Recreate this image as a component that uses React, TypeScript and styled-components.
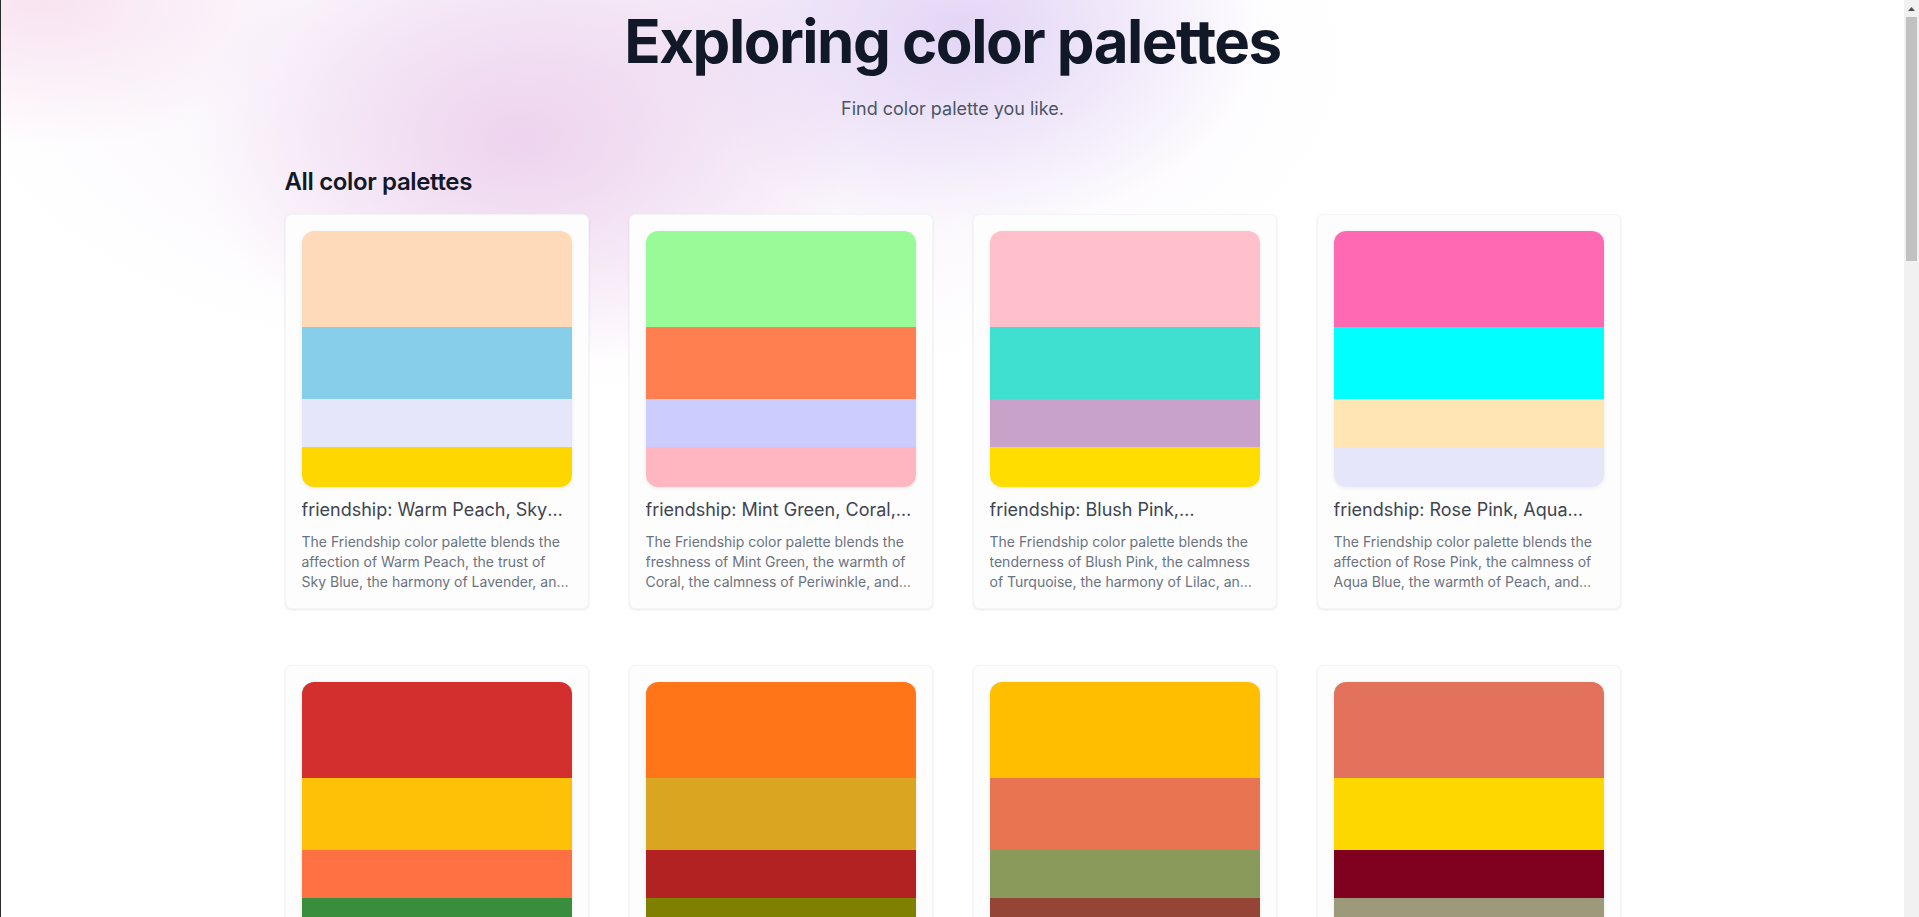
import React from "react";
import styled, { createGlobalStyle } from "styled-components";

const GlobalStyle = createGlobalStyle`
  html, body {
    margin: 0;
    padding: 0;
    background: #ffffff;
  }
  body {
    font-family: Inter, "Noto Sans", "Liberation Sans", sans-serif;
    color: #111827;
    -webkit-font-smoothing: antialiased;
  }
  * {
    box-sizing: border-box;
  }
`;

const Page = styled.div`
  min-height: 100vh;
  margin-right: 15px;
  border-left: 1px solid #2b2b2b;
  background:
    radial-gradient(ellipse 260px 150px at 40px 0px, rgba(246, 218, 236, 0.75), rgba(246, 218, 236, 0) 100%),
    radial-gradient(ellipse 330px 230px at 520px 140px, rgba(236, 206, 236, 0.85), rgba(236, 206, 236, 0) 100%),
    radial-gradient(ellipse 300px 200px at 960px 30px, rgba(226, 212, 246, 0.95), rgba(226, 212, 246, 0) 100%),
    radial-gradient(ellipse 700px 330px at 650px 60px, rgba(244, 234, 248, 0.9), rgba(244, 234, 248, 0) 100%),
    #ffffff;
`;

const ScrollTrack = styled.div`
  position: fixed;
  top: 0;
  right: 0;
  width: 15px;
  height: 100vh;
  background: #f1f1f1;
  display: flex;
  flex-direction: column;
  align-items: center;
`;

const ScrollArrow = styled.div`
  flex: 0 0 17px;
  display: flex;
  align-items: center;
  justify-content: center;
`;

const ScrollThumb = styled.div`
  width: 11px;
  height: 244px;
  background: #c1c1c1;
`;

const Container = styled.main`
  width: 1336px;
  margin: 0 auto;
  padding: 11px 0 64px;
`;

const Hero = styled.header`
  display: flex;
  flex-direction: column;
  align-items: center;
  text-align: center;
`;

const Title = styled.h1`
  margin: 0;
  font-size: 60px;
  line-height: 60px;
  font-weight: 700;
  letter-spacing: -0.025em;
  color: #111827;
`;

const Subtitle = styled.p`
  margin: 24px 0 0;
  font-size: 18px;
  line-height: 28px;
  color: #4b5563;
`;

const SectionTitle = styled.h2`
  margin: 43px 0 16px;
  font-size: 24px;
  line-height: 32px;
  font-weight: 600;
  letter-spacing: -0.015em;
  color: #111827;
`;

const Grid = styled.div`
  display: grid;
  grid-template-columns: repeat(4, 304px);
  column-gap: 40px;
  row-gap: 56px;
`;

const Card = styled.article`
  display: flex;
  flex-direction: column;
  padding: 16px;
  background: #fdfdfd;
  border: 1px solid #f3f4f6;
  border-radius: 6px;
  box-shadow: 0 1px 3px rgba(0, 0, 0, 0.07), 0 1px 2px rgba(0, 0, 0, 0.03);
`;

const Swatch = styled.div`
  display: flex;
  flex-direction: column;
  height: 256px;
  border-radius: 12px;
  overflow: hidden;
  box-shadow: 0 1px 4px rgba(0, 0, 0, 0.08);
`;

const Band = styled.div<{ $color: string; $h: number }>`
  flex: 0 0 ${(p) => p.$h}px;
  background: ${(p) => p.$color};
`;

const CardTitle = styled.h3`
  margin: 9px 0 0;
  font-size: 18px;
  line-height: 28px;
  font-weight: 400;
  color: #3f4451;
  display: -webkit-box;
  -webkit-line-clamp: 1;
  -webkit-box-orient: vertical;
  overflow: hidden;
`;

const CardText = styled.p`
  margin: 8px 0 0;
  font-size: 14px;
  line-height: 20px;
  color: #6b7280;
  display: -webkit-box;
  -webkit-line-clamp: 3;
  -webkit-box-orient: vertical;
  overflow: hidden;
`;

type Palette = {
  name: string;
  text: string;
  colors: string[];
};

const bands = [96, 72, 48, 40];

const palettes: Palette[] = [
  {
    name: "friendship: Warm Peach, Sky Blue, Lavender, Golden Yellow",
    text: "The Friendship color palette blends the affection of Warm Peach, the trust of Sky Blue, the harmony of Lavender, and the joy of Golden Yellow.",
    colors: ["#FFDAB9", "#87CEEB", "#E6E6FA", "#FFD700"],
  },
  {
    name: "friendship: Mint Green, Coral, Periwinkle, Soft Pink",
    text: "The Friendship color palette blends the freshness of Mint Green, the warmth of Coral, the calmness of Periwinkle, and the sweetness of Soft Pink.",
    colors: ["#98FB98", "#FF7F50", "#CCCCFF", "#FFB6C1"],
  },
  {
    name: "friendship: Blush Pink, Turquoise, Lilac, Sunny Yellow",
    text: "The Friendship color palette blends the tenderness of Blush Pink, the calmness of Turquoise, the harmony of Lilac, and the joy of Sunny Yellow.",
    colors: ["#FFC0CB", "#40E0D0", "#C8A2C8", "#FFDD00"],
  },
  {
    name: "friendship: Rose Pink, Aqua Blue, Peach, Lavender",
    text: "The Friendship color palette blends the affection of Rose Pink, the calmness of Aqua Blue, the warmth of Peach, and the tranquility of Lavender.",
    colors: ["#FF69B4", "#00FFFF", "#FFE5B4", "#E6E6FA"],
  },
  {
    name: "celebration: Festive Red, Amber, Tangerine, Evergreen",
    text: "The Celebration color palette blends the excitement of Festive Red, the cheer of Amber, the energy of Tangerine, and the freshness of Evergreen.",
    colors: ["#D32F2F", "#FFC107", "#FF7043", "#388E3C"],
  },
  {
    name: "harvest: Pumpkin, Goldenrod, Firebrick, Olive",
    text: "The Harvest color palette blends the warmth of Pumpkin, the richness of Goldenrod, the depth of Firebrick, and the earthiness of Olive.",
    colors: ["#FF7518", "#DAA520", "#B22222", "#808000"],
  },
  {
    name: "autumn: Amber, Burnt Sienna, Moss Green, Chestnut",
    text: "The Autumn color palette blends the glow of Amber, the warmth of Burnt Sienna, the calm of Moss Green, and the depth of Chestnut.",
    colors: ["#FFBF00", "#E97451", "#8A9A5B", "#954535"],
  },
  {
    name: "heritage: Terracotta, Gold, Burgundy, Sage",
    text: "The Heritage color palette blends the earthiness of Terracotta, the richness of Gold, the elegance of Burgundy, and the calm of Sage.",
    colors: ["#E2725B", "#FFD700", "#800020", "#9C9A7A"],
  },
];

const PaletteCard = ({ palette }: { palette: Palette }) => {
  return (
    <Card>
      <Swatch>
        {palette.colors.map((color, i) => (
          <Band key={color + i} $color={color} $h={bands[i]} />
        ))}
      </Swatch>
      <CardTitle>{palette.name}</CardTitle>
      <CardText>{palette.text}</CardText>
    </Card>
  );
};

export default function App() {
  return (
    <Page>
      <GlobalStyle />
      <Container>
        <Hero>
          <Title>Exploring color palettes</Title>
          <Subtitle>Find color palette you like.</Subtitle>
        </Hero>
        <SectionTitle>All color palettes</SectionTitle>
        <Grid>
          {palettes.map((p) => (
            <PaletteCard key={p.name} palette={p} />
          ))}
        </Grid>
      </Container>
      <ScrollTrack>
        <ScrollArrow>
          <svg width="7" height="4" viewBox="0 0 7 4">
            <path d="M0 4 L3.5 0 L7 4 Z" fill="#505050" />
          </svg>
        </ScrollArrow>
        <ScrollThumb />
      </ScrollTrack>
    </Page>
  );
}
